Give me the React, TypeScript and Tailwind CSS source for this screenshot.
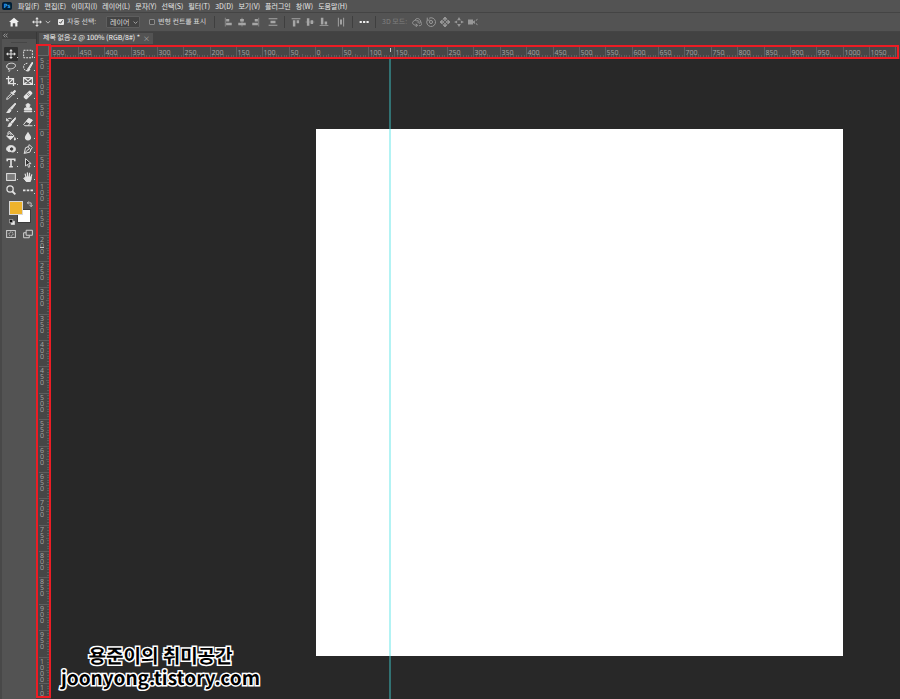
import React, { ReactNode } from "react";

const UI_FONT = "font-['Noto_Sans_CJK_KR','Noto_Sans',sans-serif] [text-rendering:geometricPrecision]";

const menus = [
  "파일(F)", "편집(E)", "이미지(I)", "레이어(L)", "문자(Y)", "선택(S)",
  "필터(T)", "3D(D)", "보기(V)", "플러그인", "창(W)", "도움말(H)",
];

function Icon({ children, className = "size-2.5" }: { children: ReactNode; className?: string }) {
  return (
    <svg
      viewBox="0 0 16 16"
      className={`${className} shrink-0`}
      fill="none"
      stroke="currentColor"
      strokeWidth="1.6"
      aria-hidden="true"
    >
      {children}
    </svg>
  );
}

const moveShape = (
  <>
    <path d="M8 2v12M2 8h12" />
    <path d="M8 0l2.800 3.400H5.200zM8 16l2.800-3.400H5.200zM0 8l3.400-2.800v5.600zM16 8l-3.400-2.800v5.600z" fill="currentColor" stroke="none" />
  </>
);

const tools: { name: string; shape: ReactNode; plain?: boolean }[] = [
  { name: "이동", shape: moveShape },
  { name: "선택 윤곽", shape: <rect x="1" y="2" width="14" height="12" strokeDasharray="3 1.7" /> },
  {
    name: "올가미",
    shape: <path d="M5 11C1 10 0 7 2 4.500C5 1 13 1 15 4.500C16 8 12 11 7 11C4 10 3 13 5 13C7 13 6 15 4 16" />,
  },
  {
    name: "빠른 선택",
    shape: (
      <>
        <path d="M7 2C3 2 1 5 1 8s2 6 6 6" strokeDasharray="2.5 1.5" />
        <path d="M15 0l1 1-5 9-2-1zM8.500 9.500l2.500 1.500c0 3-3 4-5 3 2-1 1-3 2.500-4.500z" fill="currentColor" />
      </>
    ),
  },
  { name: "자르기", shape: <path d="M4 0v12h12M0 4h12v12M5 11l6-6" strokeWidth="2" /> },
  { name: "프레임", shape: <path d="M1 2.500h14v11H1zM1 2.500l14 11M15 2.500l-14 11" strokeWidth="2" /> },
  {
    name: "스포이드",
    shape: (
      <>
        <path d="M9 5L2 12l-1 3 3-1 7-7" />
        <path d="M8 4l1-1 2 1 2-3c2-1 3 1 2 2l-3 2 1 2-1 1z" fill="currentColor" />
      </>
    ),
  },
  {
    name: "복구 브러시",
    shape: (
      <>
        <path d="M11 3l2 2-8 8-2-2z" fill="currentColor" strokeWidth="4" strokeLinejoin="round" />
        <path d="M6 6l4 4M8 5l3 3" stroke="#535353" strokeWidth="1" />
      </>
    ),
  },
  {
    name: "브러시",
    shape: <path d="M15 0l1 1-7 9-2-2zM6 9l2 2c0 4-4 5-7 4 3-1 2-5 5-6z" fill="currentColor" />,
  },
  {
    name: "도장",
    shape: <path d="M7 8C3 2 6 1 8 1s5 1 1 7h4l1 3H2l1-3zM2 13h12v1H2z" fill="currentColor" />,
  },
  {
    name: "작업 내역 브러시",
    shape: (
      <>
        <path d="M15 1l1 1-6 8-2-2zM7 9l2 2c0 4-4 4-6 4 2-1 1-5 4-6z" fill="currentColor" />
        <path d="M1 2v4h4M1 6c2-4 5-5 8-3" />
      </>
    ),
  },
  {
    name: "지우개",
    shape: (
      <>
        <path d="M9 2l6 3-4 5-6-3z" fill="currentColor" />
        <path d="M5 7l-4 5 2 2h5l3-4M8 14h7" />
      </>
    ),
  },
  {
    name: "페인트 통",
    shape: (
      <>
        <path d="M7 2l6 6-6 6-6-6zM3 5c0-6 5-6 5 2" />
        <path d="M1 8h12l-6 6zM14 9c3 4 2 6 0 6s-2-2 0-6z" fill="currentColor" stroke="none" />
      </>
    ),
  },
  { name: "흐림 효과", shape: <path d="M8 1c3 5 5 7 5 9.500a5 4.500 0 0 1-10 0C3 8 5 6 8 1z" fill="currentColor" stroke="none" /> },
  {
    name: "닷지",
    shape: (
      <>
        <path d="M3 4c5-3 11-1 12 3 1 5-4 7-7 5-4 1-7-1-7-4 0-2 1-3 2-4z" fill="currentColor" />
        <path d="M7 8a2 2 0 1 0 4 0 2 2 0 0 0-4 0" fill="#404040" stroke="#404040" />
      </>
    ),
  },
  {
    name: "펜",
    shape: <path d="M10 1l5 5-2 2-2 5-9 2 2-9 5-2zM2 15l6-6M8 4l4 5M8 8h1v1H8z" />,
  },
  { name: "문자", shape: <path d="M2 5V2h12v3M8 2v12M5 14h6" strokeWidth="2.6" /> },
  {
    name: "직접 선택",
    shape: <path d="M4 1v12l3-3 2 5 2-1-2-5h4z" fill="#303030" strokeWidth="1.500" />,
  },
  { name: "사각형", shape: <rect x="1" y="2.500" width="14" height="11" fill="#7b7b7b" /> },
  {
    name: "손",
    shape: (
      <>
        <path d="M4 8h9v4l-2 4H6l-5-6 1-1 3 2z" fill="currentColor" />
        <path d="M5 9L3.500 3.500M7.500 8L7 1.500M10 8l.5-6M12.500 9L14 4.500" strokeWidth="2" strokeLinecap="round" />
      </>
    ),
  },
  {
    name: "돋보기",
    shape: (
      <>
        <circle cx="6.500" cy="6.500" r="5" strokeWidth="2" />
        <path d="M10 10l5 5" strokeWidth="3" />
      </>
    ),
    plain: true,
  },
  {
    name: "도구 모음 편집",
    shape: <path d="M0 7h4v3H0zM6 7h4v3H6zM12 7h4v3h-4z" fill="currentColor" stroke="none" />,
  },
];

const alignments: { name: string; shape: ReactNode }[] = [
  { name: "왼쪽 정렬", shape: <path d="M3 1h1v14H3zM5 3h5v4H5zM5 9h9v4H5z" /> },
  { name: "가로 가운데 정렬", shape: <path d="M7.500 1h1v14h-1zM5 3h6v4H5zM2 9h12v4H2z" /> },
  { name: "오른쪽 정렬", shape: <path d="M12 1h1v14h-1zM6 3h5v4H6zM2 9h9v4H2z" /> },
];

const verticalAlignments: { name: string; shape: ReactNode }[] = [
  { name: "위쪽 정렬", shape: <path d="M1 2h14v1.500H1zM3 5h4v10H3zM9 5h4v5H9z" /> },
  { name: "세로 가운데 정렬", shape: <path d="M1 7.500h14v1H1zM3 2h4v12H3zM9 5h4v6H9z" /> },
  { name: "아래쪽 정렬", shape: <path d="M1 13h14v1.500H1zM3 1h4v11H3zM9 7h4v5H9z" /> },
];

const modes3d: { name: string; shape: ReactNode }[] = [
  {
    name: "3D 회전",
    shape: <path d="M8 13C3 14-1 10 2 7s8-2 10 1M5 5c2-5 9-2 9 3M11 14c5 0 6-4 3-6M6 11l3 2-3 3M8 7l3 3 3-1" />,
  },
  {
    name: "3D 돌리기",
    shape: (
      <>
        <circle cx="8" cy="8" r="2.500" />
        <path d="M5 2a7 7 0 1 1-3 3M2 1v4h4" />
      </>
    ),
  },
  {
    name: "3D 드래그",
    shape: (
      <>
        <path d="M8 0l3 3.500H5zM8 16l3-3.500H5zM0 8l3.500-3v6zM16 8l-3.500-3v6z" fill="currentColor" />
        <path d="M8 5l3 3-3 3-3-3z" />
      </>
    ),
  },
  {
    name: "3D 슬라이드",
    shape: <path d="M8 0l3 5H5zM8 16l3-5H5zM0 8l5-2.500v5zM16 8l-5-2.500v5z" fill="currentColor" stroke="none" />,
  },
  {
    name: "3D 비율",
    shape: (
      <>
        <path d="M0 4h8v3l3-2v6L8 9v3H0z" fill="currentColor" stroke="none" />
        <path d="M15 3l-2 3M13 10l2 3" />
      </>
    ),
  },
];

function IconButton({ name, children, className = "text-[#a6a6a6]" }: { name: string; children: ReactNode; className?: string }) {
  return (
    <button type="button" aria-label={name} className={`shrink-0 ${className}`}>
      {children}
    </button>
  );
}

function Divider() {
  return <div className="mx-1.5 h-3 w-px shrink-0 bg-[#3f3f3f]" />;
}

function MenuBar() {
  return (
    <nav className="flex h-3 shrink-0 items-center bg-[#535353] pl-[2px]">
      <div className="mr-1.5 flex h-2 w-2.5 shrink-0 items-center justify-center rounded-xs bg-[#001e36] font-['Open_Sans',sans-serif] text-[6px] leading-none font-bold text-[#31a8ff]">
        Ps
      </div>
      <ul className="flex gap-[5px] text-[7px] leading-3 whitespace-nowrap text-[#e8e8e8]">
        {menus.map((m) => (
          <li key={m}>
            <button type="button" className="block">{m}</button>
          </li>
        ))}
      </ul>
    </nav>
  );
}

function OptionsBar() {
  return (
    <div className="flex h-5 shrink-0 items-center border-y border-[#444444] bg-[#535353] text-[7px] leading-3 whitespace-nowrap text-[#dcdcdc]">
      <IconButton name="홈" className="flex w-7 justify-center text-[#f0f0f0]">
        <Icon>
          <path d="M8 1l8 7h-2.500v7H10v-5H6v5H2.500V8H0z" fill="currentColor" stroke="none" />
        </Icon>
      </IconButton>
      <IconButton name="이동 도구 사전 설정" className="ml-1 flex items-center gap-[3px] text-[#e0e0e0]">
        <Icon>{moveShape}</Icon>
        <Icon className="size-1.5"><path d="M2 5l6 6 6-6" strokeWidth="2" /></Icon>
      </IconButton>
      <label className="ml-[7px] flex w-[41px] shrink-0 items-center gap-[3px]">
        <span className="relative flex">
          <input type="checkbox" defaultChecked className="peer size-1.5 appearance-none rounded-[1px] bg-[#e6e6e6]" />
          <svg viewBox="0 0 7 7" className="pointer-events-none absolute inset-0 hidden size-1.5 peer-checked:block" fill="none" stroke="#303030" aria-hidden="true">
            <path d="M1.500 3.500L3 5l2.500-3.500" />
          </svg>
        </span>
        자동 선택:
      </label>
      <div className="relative ml-[7px] flex shrink-0">
        <select aria-label="자동 선택 대상" className="h-3 w-[34px] appearance-none rounded-[1px] border border-[#5e5e5e] bg-[#434343] pl-[3px] text-[7px] leading-none">
          <option>레이어</option>
          <option>그룹</option>
        </select>
        <Icon className="pointer-events-none absolute top-1 right-[2px] size-[5px]"><path d="M2 5l6 6 6-6" strokeWidth="2" /></Icon>
      </div>
      <label className="ml-[9px] flex w-[59px] shrink-0 items-center gap-[3px]">
        <input type="checkbox" className="size-1.5 appearance-none rounded-[1px] border border-[#8a8a8a] bg-[#4a4a4a] checked:bg-[#e6e6e6]" />
        변형 컨트롤 표시
      </label>
      <Divider />
      <div className="ml-[2px] flex shrink-0 gap-1">
        {alignments.map((a) => (
          <IconButton key={a.name} name={a.name}>
            <Icon><g fill="currentColor" stroke="none">{a.shape}</g></Icon>
          </IconButton>
        ))}
      </div>
      <div className="ml-[7px] flex shrink-0">
        <IconButton name="세로 분포">
          <Icon><path d="M1 2h14v1.500H1zM1 12.500h14V14H1zM4 6h8v4H4z" fill="currentColor" stroke="none" /></Icon>
        </IconButton>
      </div>
      <Divider />
      <div className="flex shrink-0 gap-1">
        {verticalAlignments.map((a) => (
          <IconButton key={a.name} name={a.name}>
            <Icon><g fill="currentColor" stroke="none">{a.shape}</g></Icon>
          </IconButton>
        ))}
      </div>
      <div className="ml-[7px] flex shrink-0">
        <IconButton name="가로 분포">
          <Icon><path d="M3 1h1.500v14H3zM11.500 1H13v14h-1.500zM6.500 4h3v8h-3z" fill="currentColor" stroke="none" /></Icon>
        </IconButton>
      </div>
      <Divider />
      <IconButton name="정렬 및 분포" className="text-[#f0f0f0]">
        <Icon><path d="M1 6.500h3.500v3H1zM6.500 6.500H10v3H6.500zM12 6.500h3.500v3H12z" fill="currentColor" stroke="none" /></Icon>
      </IconButton>
      <Divider />
      <span className="w-[30px] shrink-0 text-[#808080]">3D 모드:</span>
      <div className="flex shrink-0 gap-1">
        {modes3d.map((m) => (
          <IconButton key={m.name} name={m.name} className="text-[#989898]">
            <Icon>{m.shape}</Icon>
          </IconButton>
        ))}
      </div>
    </div>
  );
}

function ToolPanel() {
  return (
    <aside className="flex w-9 shrink-0 flex-col border-l-2 border-[#484848] bg-[#535353] text-[#e2e2e2]">
      <div className="flex h-[7px] items-center bg-[#424242] pl-px text-[#c8c8c8]">
        <Icon className="size-[5px]"><path d="M7 2L2 8l5 6M14 2L9 8l5 6" strokeWidth="2" /></Icon>
      </div>
      <div className="mx-auto mt-[3px] mb-1 h-px w-4 bg-[#464646]" />
      <div className="grid h-[150px] auto-rows-fr grid-cols-2">
        {tools.map((t, i) => (
          <button key={t.name} type="button" aria-label={t.name} className="relative flex items-center justify-center">
            <span className={`flex size-3.5 items-center justify-center ${i === 0 ? "rounded-[1px] bg-[#303030]" : ""}`}>
              <Icon>{t.shape}</Icon>
            </span>
            {!t.plain && <span className="absolute right-px bottom-[3px] size-px bg-[#d0d0d0]" />}
          </button>
        ))}
      </div>
      <div className="relative mt-1 ml-[7px] size-6">
        <button type="button" aria-label="배경색" className="absolute top-2 left-2 size-3.5 border border-[#3c3c3c] bg-white" />
        <button type="button" aria-label="전경색" className="absolute top-0 left-0 size-3.5 border border-[#d8d8d8] bg-[#eeb32c]" />
        <button type="button" aria-label="색상 전환" className="absolute top-0 right-0">
          <Icon className="size-1.5"><path d="M5 1L1 5l4 4M1 5h10v10M7 11l4 4 4-4" strokeWidth="2" /></Icon>
        </button>
        <button type="button" aria-label="기본 색상" className="absolute bottom-0 left-0">
          <Icon className="size-1.5">
            <path d="M6 6h9v9H6z" fill="#e8e8e8" />
            <path d="M1 1h9v9H1z" fill="#111111" />
          </Icon>
        </button>
      </div>
      <div className="mt-1 grid grid-cols-2 justify-items-center">
        <IconButton name="빠른 마스크" className="text-[#d0d0d0]">
          <Icon>
            <rect x="1" y="2.500" width="14" height="11" />
            <circle cx="8" cy="8" r="3.200" strokeDasharray="2 1" />
          </Icon>
        </IconButton>
        <IconButton name="화면 모드" className="text-[#d0d0d0]">
          <Icon><path d="M5 2h10v8H5zM5 6H1v8h9v-4" /></Icon>
        </IconButton>
      </div>
    </aside>
  );
}

const PX_PER_UNIT = 0.5275;
const LABEL = "fill-[#a4a4a4] font-['Open_Sans',sans-serif] text-[7px]";
const range = (from: number, to: number, step: number) =>
  Array.from({ length: Math.floor((to - from) / step) + 1 }, (_, i) => from + i * step);

function HorizontalRuler() {
  const at = (v: number) => Math.floor(264.7 + v * PX_PER_UNIT) + 0.5;
  return (
    <div className="mt-px mr-px h-3.5 shrink-0 border-2 border-l-0 border-[#ed1c24] bg-[#464646]">
      <svg className="block h-2.5 w-full overflow-hidden" aria-label="가로 눈금자">
        {range(-500, 1200, 5).map((v) => (
          <path key={v} d={`M${at(v)} ${v % 50 === 0 ? 0 : v % 25 === 0 ? 7 : 8}V10`} stroke="#5e5e5e" />
        ))}
        {range(-500, 1050, 50).map((v) => (
          <text key={v} x={at(v) + 1} y="8" className={LABEL}>
            {Math.abs(v)}
          </text>
        ))}
        <path d="M339.500 1V5" stroke="#c8c8c8" />
      </svg>
    </div>
  );
}

function VerticalRuler() {
  const at = (v: number) => Math.round(83 + v * PX_PER_UNIT) + 0.5;
  return (
    <div className="mb-px flex w-[15px] shrink-0 border-2 border-[#ed1c24] bg-[#464646]">
      <svg className="block h-full w-full overflow-hidden" aria-label="세로 눈금자">
        {range(-130, 1200, 5).map((v) => (
          <path key={v} d={`M${v % 50 === 0 ? 1 : v % 25 === 0 ? 8 : 9} ${at(v)}H11`} stroke="#5e5e5e" />
        ))}
        {range(-100, 1050, 50).map((v) =>
          String(Math.abs(v)).split("").map((digit, i) => (
            <text key={`${v}-${i}`} x="2" y={at(v) + 6 + i * 6.3} className={LABEL}>
              {digit}
            </text>
          )),
        )}
        <text x="2" y="17" className={LABEL}>5</text>
        <text x="2" y="23" className={LABEL}>0</text>
        <path d="M2 201.500H6" stroke="#c8c8c8" />
        <rect x="0" y="0" width="11" height="9" fill="#4c4c4c" />
        <path d="M0 9.500H10.500V0" fill="none" stroke="#686868" />
      </svg>
    </div>
  );
}

export default function App() {
  return (
    <div className={`flex h-screen flex-col overflow-hidden bg-[#424242] ${UI_FONT}`}>
      <MenuBar />
      <OptionsBar />
      <div className="flex min-h-0 grow">
        <ToolPanel />
        <main className="flex min-w-0 grow flex-col">
          <div className="flex h-3 shrink-0 border-l border-[#383838] pl-[2px]">
            <div className="mt-px flex items-center gap-[3px] bg-[#535353] pr-[3px] pl-1 text-[7px] leading-none whitespace-nowrap text-[#f4f4f4]">
              <span>제목 없음-2 @ 100% (RGB/8#) *</span>
              <button type="button" aria-label="탭 닫기" className="text-[#b0b0b0]">×</button>
            </div>
          </div>
          <div className="flex min-h-0 grow">
            <VerticalRuler />
            <div className="flex min-w-0 grow flex-col">
              <HorizontalRuler />
              <div className="relative min-h-0 grow overflow-hidden bg-[#282828] pt-[70px] pl-[265px]">
                <div className="aspect-square w-[527px] bg-white" />
                <div className="absolute inset-y-0 left-[338px] w-0.5 bg-[#40e0e4]/40" />
                <div className="absolute bottom-2.5 left-2.5 text-center text-[19px] leading-[22px] font-bold whitespace-nowrap text-black [-webkit-text-stroke:3px_#ffffff] [paint-order:stroke_fill]">
                  <p>용준이의 취미공간</p>
                  <p>joonyong.tistory.com</p>
                </div>
              </div>
            </div>
          </div>
        </main>
      </div>
    </div>
  );
}
